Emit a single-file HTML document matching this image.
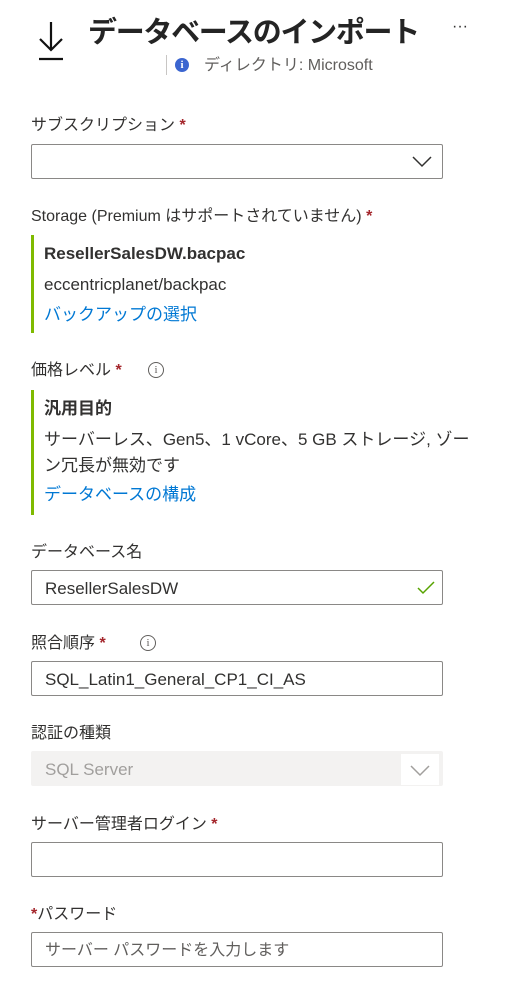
<!DOCTYPE html>
<html><head><meta charset="utf-8"><style>
body{margin:0;width:524px;height:1006px;background:#fff;position:relative;overflow:hidden;font-family:"Liberation Sans","Noto Sans CJK JP",sans-serif;color:#323130}
.a{position:absolute;white-space:nowrap}
.l{font-size:16px;line-height:20px}
.s{color:#a4262c;font-weight:bold}
.box{position:absolute;left:31px;width:410px;height:33px;border:1px solid #8a8886;border-radius:2px;box-sizing:content-box}
.bar{position:absolute;left:31px;width:3px;background:#7fba00}
.lnk{color:#0078d4}
.info{position:absolute;width:14px;height:14px;border:1.3px solid #605e5c;border-radius:50%;font-size:11px;line-height:14px;text-align:center;color:#605e5c;font-family:"Liberation Serif",serif}
.txt{position:absolute;left:13px;top:8px;font-size:17px;line-height:20px}
</style></head><body>
<svg class="a" style="left:36px;top:20px" width="30" height="42" viewBox="0 0 30 42"><path d="M15 2V30M4 19L15 30L26 19" stroke="#111" stroke-width="2.2" fill="none"/><path d="M3 39H27" stroke="#111" stroke-width="2.2"/></svg>
<div class="a" style="left:88px;top:8px;font-size:29px;line-height:42px;font-weight:bold;color:#242424;letter-spacing:-1.3px;transform:translateY(4px)">データベースのインポート</div>
<div class="a" style="left:452px;top:18px;font-size:16px;color:#323130">···</div>
<div class="a" style="left:166px;top:55px;width:1px;height:20px;background:#c8c6c4"></div>
<div class="a" style="left:175px;top:58px;width:14px;height:14px;border-radius:50%;background:#3b65d0;color:#fff;font-size:11px;line-height:14px;text-align:center;font-weight:bold;font-family:'Liberation Serif',serif">i</div>
<div class="a" style="left:204px;top:56px;font-size:16px;line-height:20px;color:#605e5c">ディレクトリ: Microsoft</div>

<div class="a l" style="left:31px;top:116px">サブスクリプション <span class="s">*</span></div>
<div class="box" style="top:144px"><svg class="a" style="left:380px;top:11px" width="20" height="12"><path d="M1 1L10 10L19 1" stroke="#323130" stroke-width="1.5" fill="none"/></svg></div>

<div class="a l" style="left:31px;top:207px">Storage (Premium はサポートされていません) <span class="s">*</span></div>
<div class="bar" style="top:235px;height:98px"></div>
<div class="a l" style="left:44px;top:244px;font-weight:bold;font-size:17px">ResellerSalesDW.bacpac</div>
<div class="a l" style="left:44px;top:275px;font-size:17px">eccentricplanet/backpac</div>
<div class="a l lnk" style="left:44px;top:305px;font-size:17px">バックアップの選択</div>

<div class="a l" style="left:31px;top:361px">価格レベル <span class="s">*</span></div>
<div class="info" style="left:148px;top:362px">i</div>
<div class="bar" style="top:390px;height:125px"></div>
<div class="a l" style="left:44px;top:399px;font-weight:bold;font-size:17px">汎用目的</div>
<div class="a l" style="left:44px;top:430px;font-size:17px">サーバーレス、Gen5、1 vCore、5 GB ストレージ, ゾー</div>
<div class="a l" style="left:44px;top:456px;font-size:17px">ン冗長が無効です</div>
<div class="a l lnk" style="left:44px;top:485px;font-size:17px">データベースの構成</div>

<div class="a l" style="left:31px;top:543px">データベース名</div>
<div class="box" style="top:570px"><div class="txt">ResellerSalesDW</div><svg class="a" style="left:385px;top:10px" width="18" height="14"><path d="M1 7L6 12L17 1" stroke="#57a300" stroke-width="1.5" fill="none"/></svg></div>

<div class="a l" style="left:31px;top:634px">照合順序 <span class="s">*</span></div>
<div class="info" style="left:140px;top:635px">i</div>
<div class="box" style="top:661px"><div class="txt">SQL_Latin1_General_CP1_CI_AS</div></div>

<div class="a l" style="left:31px;top:724px">認証の種類</div>
<div class="box" style="top:751px;background:#f3f2f1;border-color:#f3f2f1"><div class="txt" style="color:#a19f9d">SQL Server</div><div class="a" style="left:369px;top:2px;width:38px;height:31px;background:#fff"><svg class="a" style="left:9px;top:11px" width="20" height="12"><path d="M1 1L10 10L19 1" stroke="#a19f9d" stroke-width="1.5" fill="none"/></svg></div></div>

<div class="a l" style="left:31px;top:815px">サーバー管理者ログイン <span class="s">*</span></div>
<div class="box" style="top:842px"></div>

<div class="a l" style="left:31px;top:905px"><span class="s">*</span>パスワード</div>
<div class="box" style="top:932px"><div class="txt" style="color:#605e5c;font-size:16px">サーバー パスワードを入力します</div></div>
</body></html>
